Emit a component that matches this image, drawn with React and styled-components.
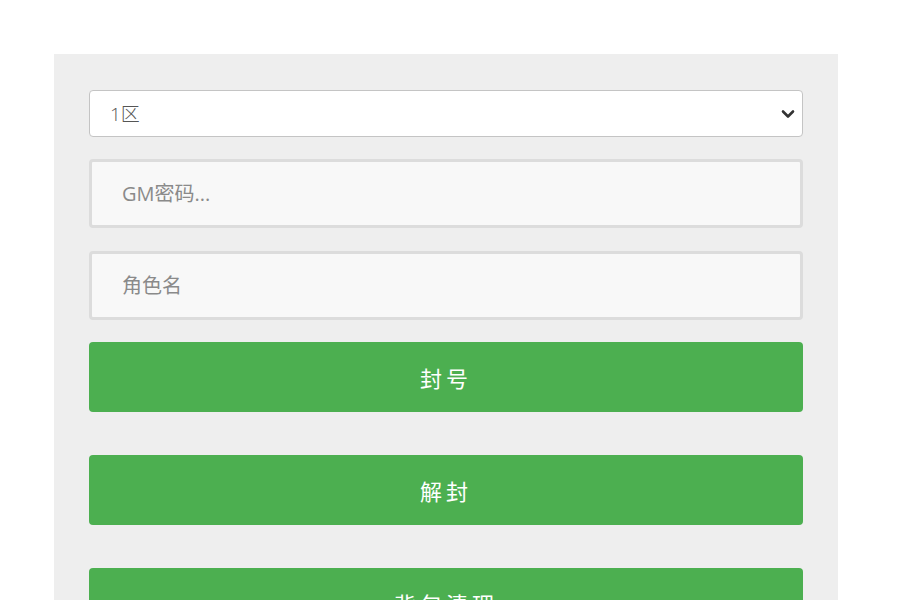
import styled, { createGlobalStyle } from "styled-components";

const GlobalStyle = createGlobalStyle`
  html, body {
    margin: 0;
    padding: 0;
    background: #fff;
    font-family: "Open Sans", "Noto Sans CJK SC", sans-serif;
  }
`;

const chevron =
  "data:image/svg+xml;utf8," +
  encodeURIComponent(
    '<svg xmlns="http://www.w3.org/2000/svg" width="14" height="10" viewBox="0 0 14 10"><path d="M2 2.5 L7 7.5 L12 2.5" fill="none" stroke="#333" stroke-width="2.6" stroke-linecap="round" stroke-linejoin="round"/></svg>'
  );

export default function App() {
  return (
    <>
      <GlobalStyle />
      <Page>
        <Panel>
          <ZoneSelect defaultValue="1">
            <option value="1">1区</option>
            <option value="2">2区</option>
            <option value="3">3区</option>
          </ZoneSelect>
          <TextInput type="password" placeholder="GM密码..." />
          <TextInput type="text" placeholder="角色名" />
          <ActionButton>封号</ActionButton>
          <ActionButton>解封</ActionButton>
          <ActionButton>背包清理</ActionButton>
        </Panel>
      </Page>
    </>
  );
}

const Page = styled.div`
  padding: 54px 62px 0 54px;
  height: 600px;
  box-sizing: border-box;
  overflow: hidden;
`;

const Panel = styled.div`
  width: 784px;
  box-sizing: border-box;
  background-color: #eeeeee;
  padding: 36px 35px 40px 35px;
  display: flex;
  flex-direction: column;
`;

const ZoneSelect = styled.select`
  appearance: none;
  -webkit-appearance: none;
  height: 47px;
  width: 100%;
  box-sizing: border-box;
  border: 1px solid #c4c4c4;
  border-radius: 4px;
  background-color: #fff;
  background-image: url("${chevron}");
  background-repeat: no-repeat;
  background-position: right 7px center;
  background-size: 14px 10px;
  padding: 0 30px 0 20px;
  font-family: "Open Sans", "Noto Sans CJK SC", sans-serif;
  font-size: 19px;
  font-weight: 300;
  color: #555;
  margin-bottom: 22px;
`;

const TextInput = styled.input`
  height: 69px;
  width: 100%;
  box-sizing: border-box;
  border: 3px solid #dcdcdc;
  border-radius: 4px;
  background-color: #f8f8f8;
  padding: 0 30px;
  font-family: "Open Sans", "Noto Sans CJK SC", sans-serif;
  font-size: 20px;
  color: #333;
  margin-bottom: 23px;
  outline: none;

  &::placeholder {
    color: #8a8a8a;
  }
`;

const ActionButton = styled.button`
  height: 70px;
  width: 100%;
  border: 0;
  border-radius: 4px;
  background-color: #4caf50;
  color: #fff;
  font-family: "Open Sans", "Noto Sans CJK SC", sans-serif;
  font-size: 22px;
  letter-spacing: 4px;
  cursor: pointer;
  margin-bottom: 43px;

  &:first-of-type {
    margin-top: -1px;
  }
`;
